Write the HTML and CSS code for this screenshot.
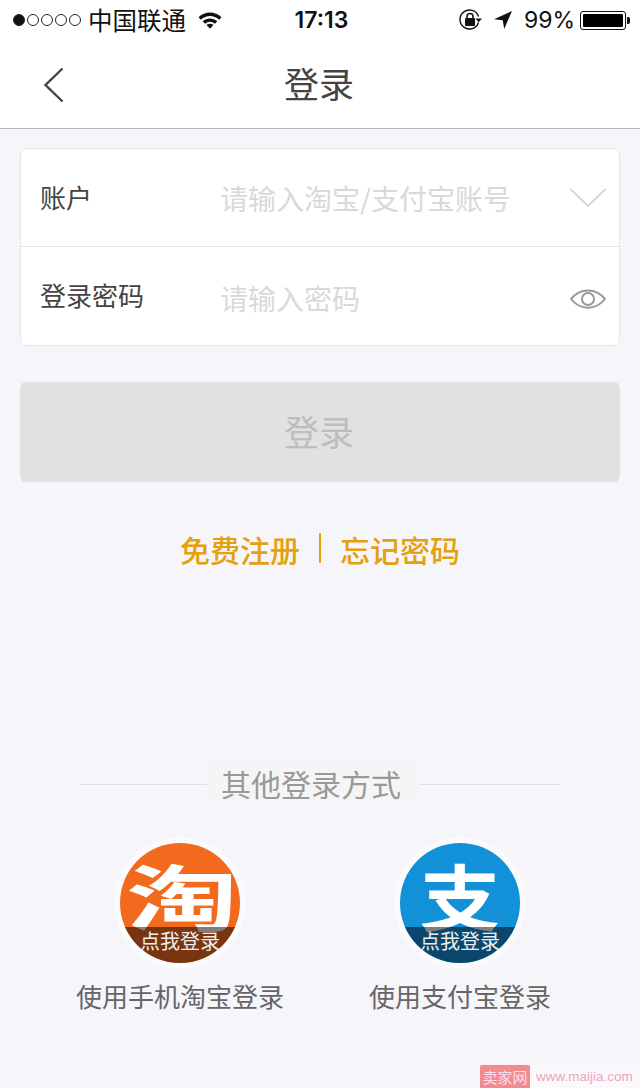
FILE: index.html
```html
<!DOCTYPE html>
<html>
<head>
    <title>登录</title>
    <link rel="stylesheet" href="styles.css">
</head>
<body>
    <div class="status-bar">
        <div class="status-left">
            <div class="signal">
                <span class="dot full"></span>
                <span class="dot"></span>
                <span class="dot"></span>
                <span class="dot"></span>
                <span class="dot"></span>
            </div>
            <span class="carrier">中国联通</span>
            <svg class="wifi" width="24" height="18" viewBox="0 0 24 18">
                <path d="M0.5 6.2C7.2 0 16.8 0 23.5 6.2L21.1 8.7C15.6 3.9 8.4 3.9 2.9 8.7Z" fill="#111"/>
                <path d="M4.700 10.300C9.200 6.500 14.800 6.500 19.300 10.300L16.900 12.700C13.800 10 10.200 10 7.100 12.700Z" fill="#111"/>
                <path d="M8.500 14L12 17.800L15.500 14C13.300 12.300 10.700 12.300 8.500 14Z" fill="#111"/>
            </svg>
        </div>
        <span class="time">17:13</span>
        <div class="status-right">
            <svg class="lock" width="24" height="24" viewBox="0 0 24 24">
                <path d="M20.5 14.5A9.5 9.5 0 1 1 20.5 8.5" fill="none" stroke="#111" stroke-width="1.4"/>
                <path d="M17.5 10.5H24L20.7 14.2Z" fill="#111"/>
                <rect x="7" y="10" width="10" height="8" rx="1" fill="#111"/>
                <path d="M9 10V8.5A3 3 0 0 1 15 8.5V10" fill="none" stroke="#111" stroke-width="1.6"/>
            </svg>
            <svg class="arrow" width="20" height="20" viewBox="0 0 20 20">
                <path d="M19 1L1 9.3L9.7 10.3L11.2 19Z" fill="#111"/>
            </svg>
            <span class="percent">99%</span>
            <div class="battery">
                <div class="battery-fill"></div>
            </div>
            <div class="battery-tip"></div>
        </div>
    </div>

    <div class="nav-bar">
        <svg class="back" width="22" height="36" viewBox="0 0 22 36">
            <path d="M19.5 1.5L2.5 18L19.5 34.5" fill="none" stroke="#444" stroke-width="2.4"/>
        </svg>
        <span class="nav-title">登录</span>
    </div>

    <div class="container">
        <div class="form-card">
            <div class="form-row">
                <span class="row-label">账户</span>
                <span class="row-hint">请输入淘宝/支付宝账号</span>
                <svg class="row-icon" width="36" height="20" viewBox="0 0 36 20">
                    <path d="M0.5 1L18 18L35.5 1" fill="none" stroke="#c9c9c9" stroke-width="1.4"/>
                </svg>
            </div>
            <div class="form-row">
                <span class="row-label">登录密码</span>
                <span class="row-hint">请输入密码</span>
                <svg class="row-icon eye" width="36" height="24" viewBox="0 0 36 24">
                    <path d="M1 12C10 0.5 26 0.5 35 12C26 23.5 10 23.5 1 12Z" fill="none" stroke="#999" stroke-width="2"/>
                    <circle cx="18" cy="12" r="6" fill="none" stroke="#999" stroke-width="2"/>
                </svg>
            </div>
        </div>

        <button type="button" class="login-btn">登录</button>

        <div class="links">
            <span class="link">免费注册</span>
            <span class="link-sep"></span>
            <span class="link">忘记密码</span>
        </div>
    </div>

    <div class="other-title">
        <span class="other-line short"></span>
        <span class="other-text">其他登录方式</span>
        <span class="other-line"></span>
    </div>

    <div class="other-list">
        <div class="other-item">
            <div class="logo-ring">
                <div class="logo taobao">
                    <span class="logo-char">淘</span>
                    <span class="logo-band">点我登录</span>
                </div>
            </div>
            <span class="other-label">使用手机淘宝登录</span>
        </div>
        <div class="other-item">
            <div class="logo-ring">
                <div class="logo alipay">
                    <span class="logo-char">支</span>
                    <span class="logo-band">点我登录</span>
                </div>
            </div>
            <span class="other-label">使用支付宝登录</span>
        </div>
    </div>

    <div class="watermark">
        <span class="watermark-tag">卖家网</span>
        <span class="watermark-url">www.maijia.com</span>
    </div>
</body>
</html>
```

FILE: styles.css
```css
* {
    box-sizing: border-box;
}
html, body {
    height: 100%;
}
body {
    position: relative;
    margin: 0;
    overflow: hidden;
    font-family: "Noto Sans CJK SC", "Liberation Sans", sans-serif;
    background-color: #f5f5fa;
    color: #444;
}
svg {
    display: block;
    flex: none;
}
.status-bar {
    display: flex;
    align-items: center;
    justify-content: space-between;
    height: 40px;
    padding: 0 10px 0 13px;
    background: white;
    color: #111;
}
.status-left, .status-right {
    display: flex;
    align-items: center;
    width: 240px;
}
.status-right {
    justify-content: flex-end;
}
.signal {
    display: flex;
    gap: 2px;
}
.dot {
    width: 12px;
    height: 12px;
    border: 1px solid #222;
    border-radius: 50%;
}
.dot.full {
    background: #111;
}
.carrier {
    margin-left: 7px;
    font-size: 24.5px;
    line-height: 40px;
}
.wifi {
    margin-left: 12px;
}
.time {
    font-family: Inter, "Liberation Sans", sans-serif;
    font-size: 23px;
    font-weight: 600;
}
.lock {
    margin-right: 11px;
}
.arrow {
    margin-right: 11px;
}
.percent {
    margin-right: 5px;
    font-family: Inter, "Liberation Sans", sans-serif;
    font-size: 23px;
}
.battery {
    width: 46px;
    height: 19px;
    padding: 2px;
    border: 1px solid #111;
    border-radius: 3px;
}
.battery-fill {
    height: 100%;
    background: #000;
    border-radius: 1px;
}
.battery-tip {
    width: 3px;
    height: 7px;
    margin-left: 1px;
    background: #111;
    border-radius: 0 2px 2px 0;
}
.nav-bar {
    position: relative;
    display: flex;
    align-items: center;
    justify-content: center;
    height: 89px;
    padding: 0 2px 2px 0;
    background: white;
    border-bottom: 1px solid #b4b4c4;
}
.back {
    position: absolute;
    left: 43px;
    top: 27px;
}
.nav-title {
    font-size: 35px;
    line-height: 86px;
}
.container {
    padding: 19px 20px 0;
}
.form-card {
    background: white;
    border: 1px solid #e6e6ea;
    border-radius: 6px;
}
.form-row {
    display: flex;
    align-items: center;
    height: 98px;
    padding: 0 13px 0 19px;
    border-bottom: 1px solid #e2e2e2;
}
.form-row:last-child {
    border-bottom: none;
}
.form-row:last-child .row-hint {
    margin-top: 4px;
}
.row-label {
    width: 180px;
    margin-bottom: 3px;
    font-size: 26px;
}
.row-hint {
    flex: 1;
    font-size: 28px;
    color: #d9d9d9;
}
.row-icon.eye {
    margin-top: 6px;
}
.login-btn {
    display: block;
    width: 100%;
    height: 100px;
    margin-top: 36px;
    padding: 0 2px 4px 0;
    border: none;
    border-radius: 6px;
    background-color: #e1e1e1;
    color: #bdbdbd;
    font-family: inherit;
    font-size: 35px;
}
.links {
    display: flex;
    align-items: center;
    justify-content: center;
    gap: 19px;
    margin-top: 47px;
    color: #e5a00d;
    font-size: 30px;
    font-weight: 500;
}
.link {
    line-height: 40px;
}
.link-sep {
    width: 2px;
    height: 30px;
    margin-top: -3px;
    background: #e5a00d;
}
.other-title {
    display: flex;
    align-items: center;
    margin: 192px 80px 0;
}
.other-line {
    flex: 1;
    height: 1px;
    margin-top: 2px;
    background: #e0e0e6;
}
.other-line.short {
    flex: none;
    width: 127px;
}
.other-text {
    padding: 0 19px 0 14px;
    background: #f5f5f5;
    color: #999;
    font-size: 30px;
    line-height: 44px;
}
.other-list {
    display: grid;
    grid-template-columns: 1fr 1fr;
    margin-top: 32px;
    padding: 0 40px;
}
.other-item {
    display: flex;
    flex-direction: column;
    align-items: center;
}
.logo-ring {
    padding: 6px;
    background: #fbfbfd;
    border-radius: 50%;
}
.logo {
    position: relative;
    width: 120px;
    height: 120px;
    padding-top: 15px;
    overflow: hidden;
    border-radius: 50%;
    text-align: center;
    color: white;
}
.taobao {
    background: #f26a1e;
}
.alipay {
    background: #1290d8;
}
.logo-char {
    display: block;
    font-weight: 700;
    font-size: 72px;
    line-height: 72px;
}
.taobao .logo-char {
    transform: translateX(2px) scaleX(1.55);
}
.alipay .logo-char {
    transform: scaleX(1.12);
}
.logo-band {
    position: absolute;
    left: 0;
    right: 0;
    bottom: 0;
    height: 36px;
    background: rgba(0, 0, 0, 0.5);
    font-size: 20px;
    line-height: 28px;
    color: #eee;
}
.other-label {
    margin-top: 5px;
    font-size: 26px;
    line-height: 44px;
    color: #666;
}
.watermark {
    position: absolute;
    right: 0;
    bottom: 0;
    display: flex;
    align-items: center;
    width: 160px;
    height: 23px;
    background: #fbf9fb;
}
.watermark-tag {
    width: 50px;
    height: 23px;
    background: #f28b8f;
    border-radius: 2px 2px 0 0;
    color: #fde;
    font-size: 15px;
    line-height: 23px;
    text-align: center;
}
.watermark-url {
    margin-left: 6px;
    font-family: "Liberation Sans", sans-serif;
    font-size: 13.5px;
    color: #eba6b8;
}
```
